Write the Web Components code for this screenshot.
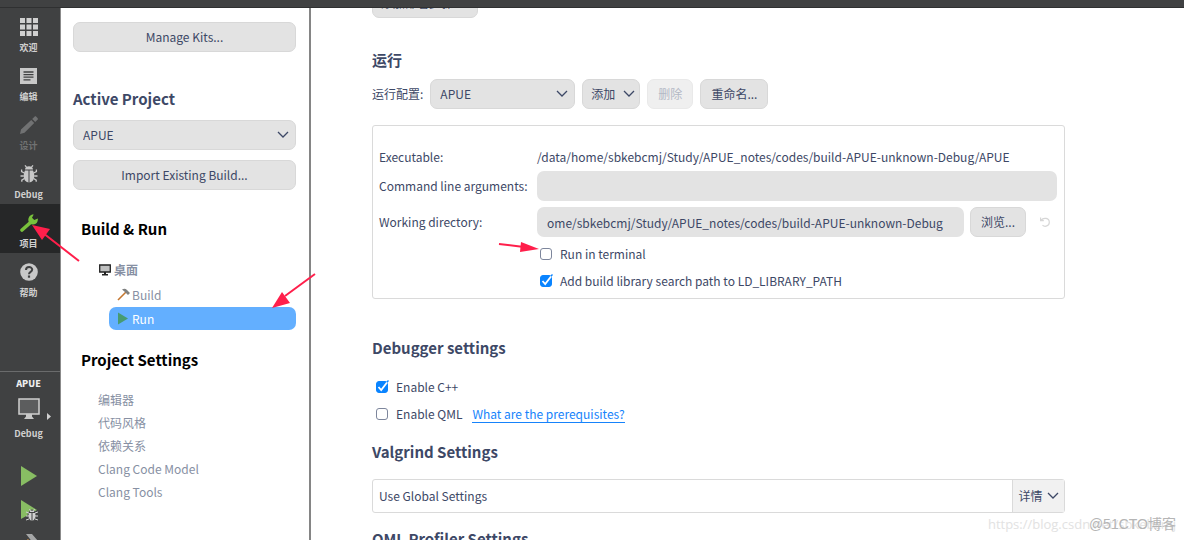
<!DOCTYPE html>
<html lang="zh-CN">
<head>
<meta charset="utf-8">
<title>Qt Creator</title>
<style>
  html { --ink: #3d4866; --muted: #8790a3; --field: #e3e3e3; --line: #dadada; --chrome: #404142; --accent: #0a84ff; }
  body { margin: 0; color: var(--ink); background: #fff; font: 12px/20px "Noto Sans CJK SC", "Noto Sans", sans-serif; }
</style>
</head>
<body>
<app-shell>
  <mode-rail slot="rail">
    <rail-item label="欢迎"><svg width="18" height="18" viewBox="0 0 18 18" fill="#d0d0d0"><path d="M0 0h5v5H0zM6.500 0h5v5h-5zM13 0h5v5h-5zM0 6.500h5v5H0zM6.500 6.500h5v5h-5zM13 6.500h5v5h-5zM0 13h5v5H0zM6.500 13h5v5h-5zM13 13h5v5h-5z"/></svg></rail-item>
    <rail-item label="编辑"><svg width="18" height="18" viewBox="0 0 18 18"><path fill="#c8c8c8" d="M0 1h17v16H0z"/><path stroke="#404142" stroke-width="1.300" d="M3.500 5h10M3.500 7.600h10M3.500 10.200h10M3.500 12.800h7"/></svg></rail-item>
    <rail-item label="设计" off><svg width="18" height="18" viewBox="0 0 18 18" fill="#717273"><path d="M0 18l1-4.500L11.200 4l3 3L4.500 16.800zM12.200 3l2.300-2.200c.7-.6 1.200-.6 1.800 0l1.200 1.300c.6.6.5 1.200 0 1.700L15.200 6z"/></svg></rail-item>
    <rail-item label="Debug"><svg width="18" height="18" viewBox="0 0 18 18"><g fill="#c8c8c8"><path d="M5 4.500C5.200 2.400 6.800 1.300 9 1.300s3.800 1.100 4 3.200zM8.500 5.400v12C5.400 17 3.700 14.600 3.700 11c0-2.300.5-4.200 1.300-5.600zM9.500 5.400v12c3.100-.4 4.800-2.800 4.800-6.400 0-2.300-.5-4.200-1.300-5.600z"/></g><path fill="none" stroke="#c8c8c8" stroke-width="1.300" d="M6.500 2.200L5 .4M11.500 2.200L13 .4M4.300 8L1.600 6.700V4.500M3.800 11H.5M4.300 13.500l-2.500 1.600v1.600M13.700 8l2.700-1.300V4.500M14.200 11h3.300M13.700 13.500l2.500 1.600v1.600"/></svg></rail-item>
    <rail-item label="项目" on><svg width="18" height="18" viewBox="0 0 18 18"><path fill="none" stroke="#79c13c" stroke-width="3.600" stroke-linecap="round" d="M2 16l8.500-7.500"/><path fill="#79c13c" d="M13.700.5L12 3.700l2.300 2.200 3.500-1.300c.4 3-1.200 5.600-4.500 6-2.400.2-4.800-1.500-5-4.300C8.200 2.700 10.800.1 13.700.5z"/></svg></rail-item>
    <rail-item label="帮助"><svg width="18" height="18" viewBox="0 0 18 18"><circle cx="9" cy="9" r="8.800" fill="#c8c8c8"/><path fill="none" stroke="#404142" stroke-width="2" d="M6 7c0-4 6.200-3.700 6.200-.4C12.200 9 9 8.800 9 11.200"/><path fill="#404142" d="M7.900 12.500h2.200v2.200H7.900z"/></svg></rail-item>
    <run-target slot="foot" project="APUE" mode="Debug"></run-target>
  </mode-rail>

  <project-panel slot="panel">
    <push-button wide>Manage Kits...</push-button>
    <section-title>Active Project</section-title>
    <combo-box value="APUE" name="Active project"></combo-box>
    <push-button wide>Import Existing Build...</push-button>
    <project-tree slot="tree"></project-tree>
  </project-panel>

  <run-settings slot="main"></run-settings>
</app-shell>
<note-layer></note-layer>

<script>
const define = (name, css, html) => customElements.define(name, class extends HTMLElement {
  connectedCallback() {
    if (this.shadowRoot) return;
    const root = this.attachShadow({ mode: 'open' });
    const t = document.createElement('template');
    t.innerHTML = `<style>:host,*{box-sizing:border-box}${css}</style>` + (typeof html === 'function' ? html(this) : html);
    root.append(t.content.cloneNode(true));
  }
});
const chevron = '<svg width="12" height="8" viewBox="0 0 12 8" fill="none" stroke="#3d4866" stroke-width="1.300" aria-hidden="true"><path d="M1 1l5 5 5-5"/></svg>';

define('app-shell', `
  :host{display:grid;grid-template:8px minmax(0,1fr)/60px 251px minmax(0,1fr);height:100vh;overflow:hidden}
  header{grid-column:1/-1;background:var(--chrome);border-bottom:1px solid #2f3031}
  ::slotted(*){min-height:0;overflow:hidden}`,
  '<header></header><slot name="rail"></slot><slot name="panel"></slot><slot name="main"></slot>');

define('mode-rail', `
  :host{display:flex;flex-direction:column;justify-content:space-between;background:var(--chrome)}
  nav{display:flex;flex-direction:column}`,
  '<nav><slot></slot></nav><slot name="foot"></slot>');

define('rail-item', `
  :host{display:block}
  button{display:flex;flex-direction:column;align-items:center;gap:6px;width:100%;height:49px;padding:10px 3px 0 0;border:0;background:none;color:#d0d0d0;font:bold 9px/12px "Noto Sans CJK SC",sans-serif}
  :host([on]) button{background:#262728}
  :host([off]) button{color:#717273}`,
  el => `<button type="button"${el.hasAttribute('off') ? ' disabled' : ''}><slot></slot><span>${el.getAttribute('label')}</span></button>`);

define('run-target', `
  :host{display:flex;flex-direction:column;height:169px;flex:none;border-top:1px solid #6a6b6c;overflow:hidden;padding-top:6px}
  button{display:flex;flex-direction:column;align-items:center;width:100%;padding:0 3px 0 0;border:0;background:none;color:#d0d0d0;font:bold 9px/12px "Noto Sans CJK SC",sans-serif;flex:none}
  .kit{height:74px;position:relative;gap:7px}
  .kit b{color:#eee}
  .arrow{position:absolute;left:47px;top:35px}
  .run{height:34px}
  .play{margin-top:14px}`,
  el => `<button class="kit" type="button"><b>${el.getAttribute('project')}</b>
    <svg width="22" height="24" viewBox="0 0 22 24"><path fill="#5c5d5e" stroke="#d0d0d0" stroke-width="1.500" d="M1 2h20v15H1z"/><path fill="#c8c8c8" d="M8 17h6v2.500l2 2.500H6l2-2.500z"/></svg>
    <span>${el.getAttribute('mode')}</span><svg class="arrow" width="4" height="7" viewBox="0 0 4 7"><path fill="#d0d0d0" d="M0 0l4 3.500L0 7z"/></svg></button>
  <button class="run play" type="button" aria-label="Run"><svg width="16" height="20" viewBox="0 0 16 20"><path fill="#88bd63" d="M0 0l16 10L0 20z"/></svg></button>
  <button class="run" type="button" aria-label="Debug"><svg width="18" height="22" viewBox="0 0 18 22"><path fill="#88bd63" d="M1 0l16 10L1 19z"/><ellipse cx="12" cy="15.500" rx="4" ry="5.500" fill="#d0d0d0" stroke="#404142"/><path stroke="#d0d0d0" d="M6 12l3 1M6 16h12M6 20l3-1M18 12l-3 1M18 20l-3-1M9.500 9l1 2M14.500 9l-1 2"/><path stroke="#404142" d="M12 12v8M9 12.500h6"/></svg></button>
  <button class="run" type="button" aria-label="Build"><svg width="18" height="16" viewBox="0 0 18 16"><path stroke="#d18a3f" stroke-width="3" d="M1 14l8-8"/><path fill="#a5a6a7" d="M6 0h6l6 7-4 4-4-6z"/></svg></button>`);

define('push-button', `
  :host{display:inline-flex;flex:none}
  :host([wide]){display:flex}
  button{height:30px;padding:0 10px;border:1px solid #d8d8d8;border-radius:7px;background:var(--field);color:inherit;font:inherit;display:flex;align-items:center;justify-content:center;gap:8px;white-space:nowrap;width:100%}
  :host([menu]) button{padding:0 4px 0 8px}
  button:disabled{background:#efefef;border-color:#e9e9e9;color:#b3b8c5}`,
  el => `<button type="button"${el.hasAttribute('disabled') ? ' disabled' : ''}><slot></slot>${el.hasAttribute('menu') ? chevron : ''}</button>`);

define('combo-box', `
  :host{display:grid;align-items:center}
  select,svg{grid-area:1/1}
  select{appearance:none;width:100%;height:30px;padding:0 9px;border:1px solid #d8d8d8;border-radius:7px;background:var(--field);color:inherit;font:inherit}
  svg{justify-self:end;margin-right:7px;pointer-events:none}`,
  el => `<select aria-label="${el.getAttribute('name')}"><option>${el.getAttribute('value')}</option></select>${chevron}`);

define('section-title', `
  :host{display:block}
  h2{margin:0;font:bold 15px/24px "Noto Sans CJK SC",sans-serif}`,
  '<h2><slot></slot></h2>');

define('check-box', `
  :host{display:flex}
  label{display:flex;align-items:center;gap:8px;height:27px}
  input{appearance:none;flex:none;width:12px;height:12px;margin:0;border:1px solid #7d869c;border-radius:3px;background:#fff}
  input:checked{border-color:var(--accent);background:var(--accent)}
  .mark{display:grid;align-items:center}
  .mark>*{grid-area:1/1}
  svg{display:none;overflow:visible}
  input:checked+svg{display:block}`,
  el => `<label><span class="mark"><input type="checkbox"${el.hasAttribute('checked') ? ' checked' : ''}><svg width="12" height="12" viewBox="0 0 12 12" fill="none"><path stroke="#fff" stroke-width="1.800" d="M2.500 6l2.700 3L11 1.500"/><path stroke="#0a84ff" stroke-width="1.500" d="M11 1l1.500-1.500"/></svg></span><slot></slot></label>`);

define('project-panel', `
  :host{display:flex;flex-direction:column;border-left:1px solid #8b8b8b;border-right:2px solid #858585;background:#fff;padding:14px 13px 0 12px}
  ::slotted(push-button){margin-bottom:10px}
  ::slotted(section-title){margin:25px 0 9px}
  ::slotted(combo-box){margin-bottom:10px}`,
  '<slot></slot><slot name="tree"></slot>');

define('project-tree', `
  :host{display:block}
  h2{margin:0 0 0 8px;font:bold 15px/24px "Noto Sans CJK SC",sans-serif;color:#000}
  .build{margin-top:17px}
  ul{list-style:none;margin:0;padding:0}
  a{color:var(--muted);text-decoration:none;display:flex;align-items:center}
  .targets{margin:16px 0 18px}
  .targets a{height:23px;gap:3px;border-radius:7px}
  .targets>li>a{margin-left:26px;font-weight:bold;height:26px}
  .targets ul a{margin-left:36px;padding-left:8px;gap:2px}
  .targets ul li+li{margin-top:1px}
  .targets a.on{background:#63afff;color:#fff}
  .settings{margin:16px 0 0 25px}
  .settings a{height:23px}`,
  `<h2 class="build">Build &amp; Run</h2>
  <ul class="targets"><li><a href="#desktop"><svg width="12" height="12" viewBox="0 0 12 12"><path fill="#bfc0c0" stroke="#222" stroke-width="1.300" d="M.7 1h10.600v7H.7z"/><path fill="#222" d="M5 8h2v2h2v1.500H3V10h2z"/></svg>桌面</a>
    <ul><li><a href="#build"><svg width="13" height="13" viewBox="0 0 13 13"><path stroke="#c4762f" stroke-width="1.600" d="M1 12l8-8"/><path fill="#7f8181" d="M5 1.500Q8 0 10 2l3 3-2 2-3-3z"/></svg>Build</a></li>
    <li><a class="on" href="#run"><svg width="13" height="13" viewBox="0 0 13 13"><path fill="#479b72" d="M1 .5l10 6-10 6z"/></svg>Run</a></li></ul></li></ul>
  <h2>Project Settings</h2>
  <ul class="settings"><li><a href="#editor">编辑器</a></li><li><a href="#style">代码风格</a></li><li><a href="#deps">依赖关系</a></li><li><a href="#model">Clang Code Model</a></li><li><a href="#tools">Clang Tools</a></li></ul>`);

define('run-settings', `
  :host{display:block;padding:0 119px 0 61px}
  .deploy{display:flex;width:max-content;margin-top:-20px}
  .config{display:flex;align-items:center;gap:7px;margin-top:7px}
  .config combo-box{width:145px}
  .title{margin-top:30px}
  .box{margin-top:16px;min-height:174px;padding:21px 7px 0 6px;border:1px solid var(--line);border-radius:3px}
  .row{display:grid;grid-template-columns:152px minmax(0,1fr);column-gap:6px;align-items:center;margin-bottom:6px}
  .row.first{margin-bottom:4px}
  input{width:100%;min-width:0;height:30px;padding:0 10px;border:0;border-radius:7px;background:var(--field);color:inherit;font:inherit}
  .dir{display:flex;align-items:center;gap:6px}
  .reset{flex:none;width:25px;height:30px;padding:0;border:0;background:none}
  .checks{margin:-3px 0 0 161px}
  .debug{margin-top:37px}
  .debugchecks{margin:13px 0 0 4px}
  .qml{display:flex;align-items:center;gap:10px}
  .qml a{color:#1683fb;text-decoration:none;border-bottom:1px solid currentColor;line-height:17px}
  .valgrind{margin-top:13px}
  .global{display:flex;justify-content:space-between;margin-top:15px;border:1px solid var(--line);border-radius:3px;height:34px}
  .global span{padding:6px}
  .global button{width:52px;border:0;border-left:1px solid var(--line);background:#f1f1f1;color:inherit;font:inherit;display:flex;align-items:center;justify-content:center;gap:4px;padding:0}
  .profiler{margin-top:14px}`,
  `<push-button class="deploy" menu>添加部署步骤</push-button>
  <section-title class="title">运行</section-title>
  <div class="config"><span>运行配置:</span><combo-box value="APUE" name="运行配置"></combo-box><push-button menu>添加</push-button><push-button disabled>删除</push-button><push-button>重命名...</push-button></div>
  <div class="box">
    <div class="row first"><span>Executable:</span><span>/data/home/sbkebcmj/Study/APUE_notes/codes/build-APUE-unknown-Debug/APUE</span></div>
    <div class="row"><label for="args">Command line arguments:</label><input id="args" type="text"></div>
    <div class="row"><label for="dir">Working directory:</label><div class="dir"><input id="dir" type="text" value="ome/sbkebcmj/Study/APUE_notes/codes/build-APUE-unknown-Debug"><push-button>浏览...</push-button><button class="reset" type="button" aria-label="Reset"><svg width="10" height="10" viewBox="0 0 10 10" fill="none" stroke="#d6d6d6" stroke-width="1.200"><path d="M.6.500v3.200h3.200M1 3.500C3.500 0 9.300 1 9.300 5.200 9.300 9 5 10.300 2.500 8.300"/></svg></button></div></div>
    <div class="checks"><check-box>Run in terminal</check-box><check-box checked>Add build library search path to LD_LIBRARY_PATH</check-box></div>
  </div>
  <section-title class="debug">Debugger settings</section-title>
  <div class="debugchecks"><check-box checked>Enable C++</check-box><div class="qml"><check-box>Enable QML</check-box><a href="#prerequisites">What are the prerequisites?</a></div></div>
  <section-title class="valgrind">Valgrind Settings</section-title>
  <div class="global"><span>Use Global Settings</span><button type="button">详情${chevron}</button></div>
  <section-title class="profiler">QML Profiler Settings</section-title>`);

define('note-layer', `
  :host{position:absolute;inset:0;pointer-events:none;overflow:hidden}
  svg{position:absolute;left:0;top:0}
  span{position:absolute;right:8px;bottom:6px;white-space:nowrap;line-height:20px}
  .url{color:#e2e2e2;font-size:13px;font-family:"Open Sans",sans-serif}
  .mark{color:#b5b5b5;font-size:14px;font-family:"Liberation Sans","Noto Sans CJK SC",sans-serif}`,
  `<svg width="560" height="340" viewBox="0 0 560 340" fill="#ff1f4b" stroke="#ff1f4b"><path stroke-width="2" d="M79 261L43 233M315 274L285 296M499 244l25 3"/><path stroke="none" d="M32 225l18 4-8 11zM272 308l10-16 8 11zM539 249l-19 3 1-10z"/></svg>
  <span class="url">https://blog.csdn.net/sbkebcmj</span><span class="mark">@51CTO博客</span>`);
</script>
</body>
</html>
